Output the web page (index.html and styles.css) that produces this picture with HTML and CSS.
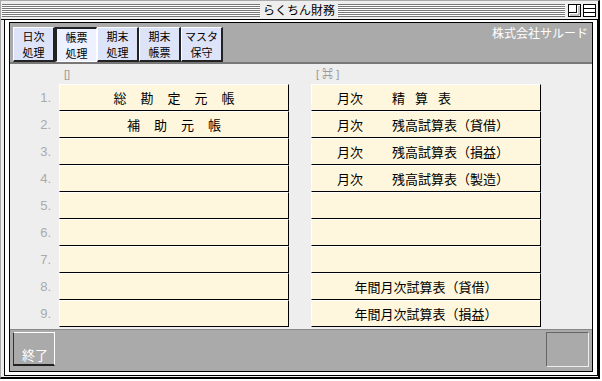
FILE: index.html
```html
<!DOCTYPE html>
<html lang="ja">
<head>
<meta charset="utf-8">
<title>らくちん財務</title>
<link rel="stylesheet" href="styles.css">
</head>
<body>
<div class="window">
  <div class="titlebar">
    <div class="tgroup"><div class="stripes"></div></div>
    <div class="title">らくちん財務</div>
    <div class="tgroup">
      <div class="stripes"></div>
      <div class="wbtn"><svg width="13" height="13" viewBox="0 0 13 13"><rect x="0.5" y="0.5" width="12" height="12" fill="#fff" stroke="#000"/><rect x="0.5" y="0.5" width="8" height="8" fill="none" stroke="#000"/><line x1="2" y1="11" x2="11" y2="11" stroke="#888"/><line x1="11" y1="2" x2="11" y2="11" stroke="#888"/></svg></div>
      <div class="wbtn"><svg width="13" height="13" viewBox="0 0 13 13"><rect x="0.5" y="0.5" width="12" height="12" fill="#fff" stroke="#000"/><line x1="1" y1="4.5" x2="12" y2="4.5" stroke="#000"/><line x1="1" y1="8.5" x2="12" y2="8.5" stroke="#000"/></svg></div>
    </div>
  </div>
  <div class="frame">
    <div class="inner">
      <div class="toolbar">
        <div class="tab"><span class="tl">日次</span><span class="tl">処理</span></div>
        <div class="tab active"><span class="tl">帳票</span><span class="tl">処理</span></div>
        <div class="tab"><span class="tl">期末</span><span class="tl">処理</span></div>
        <div class="tab"><span class="tl">期末</span><span class="tl">帳票</span></div>
        <div class="tab"><span class="tl">マスタ</span><span class="tl">保守</span></div>
        <div class="company">株式会社サルード</div>
      </div>
      <div class="main">
        <div class="col col-left">
          <div class="head">[]</div>
          <div class="row"><span class="num">1.</span><div class="btn"><span class="wide">総勘定元帳</span></div></div>
          <div class="row"><span class="num">2.</span><div class="btn"><span class="wide">補助元帳</span></div></div>
          <div class="row"><span class="num">3.</span><div class="btn"></div></div>
          <div class="row"><span class="num">4.</span><div class="btn"></div></div>
          <div class="row"><span class="num">5.</span><div class="btn"></div></div>
          <div class="row"><span class="num">6.</span><div class="btn"></div></div>
          <div class="row"><span class="num">7.</span><div class="btn"></div></div>
          <div class="row"><span class="num">8.</span><div class="btn"></div></div>
          <div class="row"><span class="num">9.</span><div class="btn"></div></div>
        </div>
        <div class="col col-right">
          <div class="head">[ ⌘ ]</div>
          <div class="btn split"><span class="pre">月次</span><span class="mid">精算表</span></div>
          <div class="btn split"><span class="pre">月次</span><span>残高試算表（貸借）</span></div>
          <div class="btn split"><span class="pre">月次</span><span>残高試算表（損益）</span></div>
          <div class="btn split"><span class="pre">月次</span><span>残高試算表（製造）</span></div>
          <div class="btn"></div>
          <div class="btn"></div>
          <div class="btn"></div>
          <div class="btn">年間月次試算表（貸借）</div>
          <div class="btn">年間月次試算表（損益）</div>
        </div>
      </div>
      <div class="footer">
        <div class="quit">終了</div>
        <div class="box"></div>
      </div>
    </div>
  </div>
</div>
</body>
</html>
```
FILE: styles.css
```css
* { box-sizing: border-box; }
body {
  margin: 0;
  background: #fff;
  font-family: "Noto Sans CJK JP", "Liberation Sans", sans-serif;
}
.window {
  width: 600px;
  height: 379px;
  border-left: 1px solid #aaa;
  border-top: 1px solid #aaa;
  border-right: 2px solid #000;
  border-bottom: 2px solid #000;
  background: #eee;
  display: flex;
  flex-direction: column;
}
.titlebar {
  height: 19px;
  border-bottom: 1px solid #000;
  display: flex;
  align-items: center;
  padding: 0 2px 0 1px;
}
.tgroup {
  flex: 1;
  display: flex;
  align-items: center;
}
.stripes {
  flex: 1;
  height: 13px;
  margin-top: 1px;
  background: repeating-linear-gradient(to bottom, #777 0 1px, #fff 1px 2px);
}
.title {
  font-size: 12px;
  line-height: 18px;
  padding: 0 3px;
  color: #000;
}
.wbtn {
  width: 13px;
  height: 13px;
  margin-left: 3px;
  display: flex;
}
.wbtn + .wbtn { margin-left: 2px; }
.frame {
  flex: 1;
  margin: 0 0 1px 3px;
  border: 1px solid #000;
  border-top: none;
  background: #fff;
  padding: 2px 4px 3px 4px;
}
.inner {
  height: 100%;
  border: 1px solid #000;
  display: flex;
  flex-direction: column;
}
.toolbar {
  height: 41px;
  flex: none;
  background: #aaa;
  border-bottom: 2px solid #777;
  display: flex;
  align-items: flex-end;
  padding-left: 3px;
}
.tab {
  width: 42px;
  height: 35px;
  background: #dde3f8;
  border-top: 1px solid #fff;
  border-left: 1px solid #fff;
  border-right: 2px solid #222;
  border-bottom: 2px solid #222;
  font-size: 11px;
  text-align: center;
  color: #000;
  display: flex;
  flex-direction: column;
  align-items: center;
}
.tl {
  display: block;
  height: 16px;
  line-height: 16px;
}
.tab.active {
  background: #eef1ff;
  border-top: 2px solid #222;
  border-left: 2px solid #222;
  border-right: 1px solid #fff;
  border-bottom: 1px solid #fff;
}
.company {
  margin-left: auto;
  align-self: flex-start;
  margin-right: 4px;
  padding-top: 3px;
  color: #fff;
  font-size: 12px;
  line-height: 14px;
}
.main {
  flex: 1;
  background: #eee;
  border-bottom: 1px solid #888;
  display: flex;
}
.col {
  display: flex;
  flex-direction: column;
}
.head {
  height: 20px;
  font-family: "Liberation Sans", sans-serif;
  font-size: 11px;
  line-height: 20px;
  color: #999;
  padding-left: 5px;
}
.col-left .head { padding-left: 54px; }
.col-right { margin-left: 22px; }
.row {
  display: flex;
}
.num {
  width: 49px;
  padding-right: 8px;
  text-align: right;
  font-family: "Liberation Sans", sans-serif;
  font-size: 13px;
  line-height: 27px;
  color: #aaa;
}
.btn {
  width: 230px;
  height: 27px;
  background: #fff7dd;
  border-top: 1px solid #fff;
  border-left: 1px solid #fff;
  border-right: 1px solid #000;
  border-bottom: 1px solid #000;
  font-size: 13px;
  line-height: 25px;
  text-align: center;
  color: #000;
}
.wide {
  letter-spacing: 14px;
  padding-left: 14px;
}
.btn.split {
  text-align: left;
  padding-left: 25px;
  display: flex;
}
.pre { width: 55px; }
.mid { letter-spacing: 10px; }
.footer {
  height: 41px;
  flex: none;
  background: #aaa;
  display: flex;
  justify-content: space-between;
  align-items: flex-start;
  padding: 2px 3px 0 3px;
}
.quit {
  width: 42px;
  height: 34px;
  border-top: 1px solid #fff;
  border-left: 1px solid #333;
  border-right: 1px solid #fff;
  border-bottom: 2px solid #222;
  color: #fff;
  font-size: 13px;
  line-height: 15px;
  display: flex;
  align-items: flex-end;
  padding: 0 0 2px 8px;
}
.box {
  width: 43px;
  height: 35px;
  border: 1px solid;
  border-color: #666 #eee #eee #666;
}
```
